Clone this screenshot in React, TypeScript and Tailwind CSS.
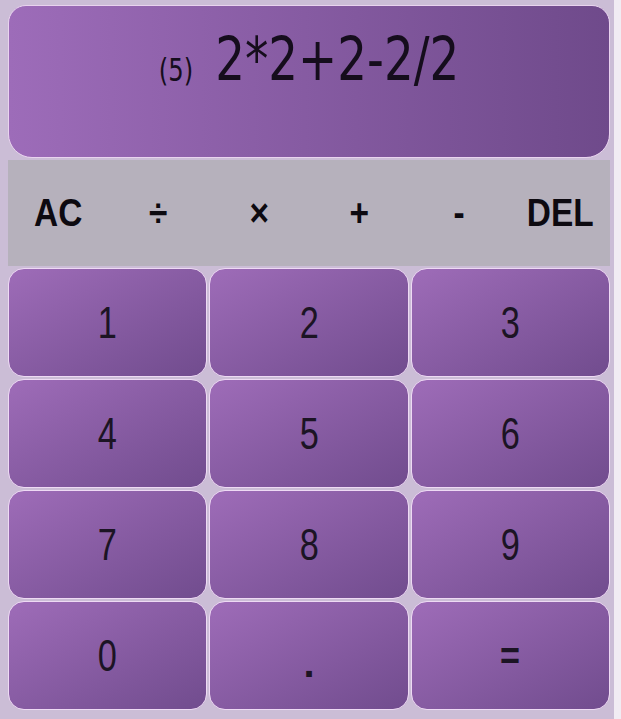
import React from "react";

const ops = ["AC", "÷", "×", "+", "-", "DEL"];
const keys = ["1", "2", "3", "4", "5", "6", "7", "8", "9", "0", ".", "="];

export default function App() {
  return (
    <div className="w-[621px] h-[719px] bg-[#f1ecf3]">
      <div className="w-[614px] h-[719px] bg-[#cbbdd6] pt-[5px] pl-[8px] pr-[4px]">
        {/* display */}
        <div className="h-[153px] rounded-t-[18px] rounded-b-[24px] border-[1.5px] border-[#e9d3ef] bg-gradient-to-r from-[#9d6cb9] to-[#6f4a8b] flex items-start justify-center pt-[27px] gap-[22px] text-[#150d1c] font-['DejaVu_Sans_Condensed','DejaVu_Sans',sans-serif]">
          <span className="text-[27px] mt-[24px] leading-none scale-y-[1.15]">(5)</span>
          <span className="text-[52px] leading-none scale-y-[1.18]">2*2+2-2/2</span>
        </div>

        {/* operator bar */}
        <div className="mt-[2px] h-[106px] bg-[#b6b1bc] grid grid-cols-6 items-center font-['Liberation_Sans',Arial,sans-serif] font-bold text-[#0d0a10]">
          {ops.map(op => (
            <div key={op} className="text-center text-[38px] leading-none scale-x-[0.88]">
              {op}
            </div>
          ))}
        </div>

        {/* number keys */}
        <div className="mt-[2px] w-[602px] grid grid-cols-3 grid-rows-[109px_109px_109px_109px] gap-[2px]">
          {keys.map(k => (
            <div
              key={k}
              className="rounded-[16px] border-[1.5px] border-[#eedaf4] bg-gradient-to-br from-[#9e6cb8] to-[#714c8e] flex items-center justify-center text-[#1c1424] font-['Liberation_Sans',Arial,sans-serif]"
            >
              <span
                className={
                  k === "="
                    ? "text-[38px] font-bold leading-none scale-x-[0.9]"
                    : k === "."
                    ? "text-[40px] font-bold leading-none mt-[14px]"
                    : "text-[44px] leading-none scale-x-[0.78]"
                }
              >
                {k}
              </span>
            </div>
          ))}
        </div>
      </div>
    </div>
  );
}
